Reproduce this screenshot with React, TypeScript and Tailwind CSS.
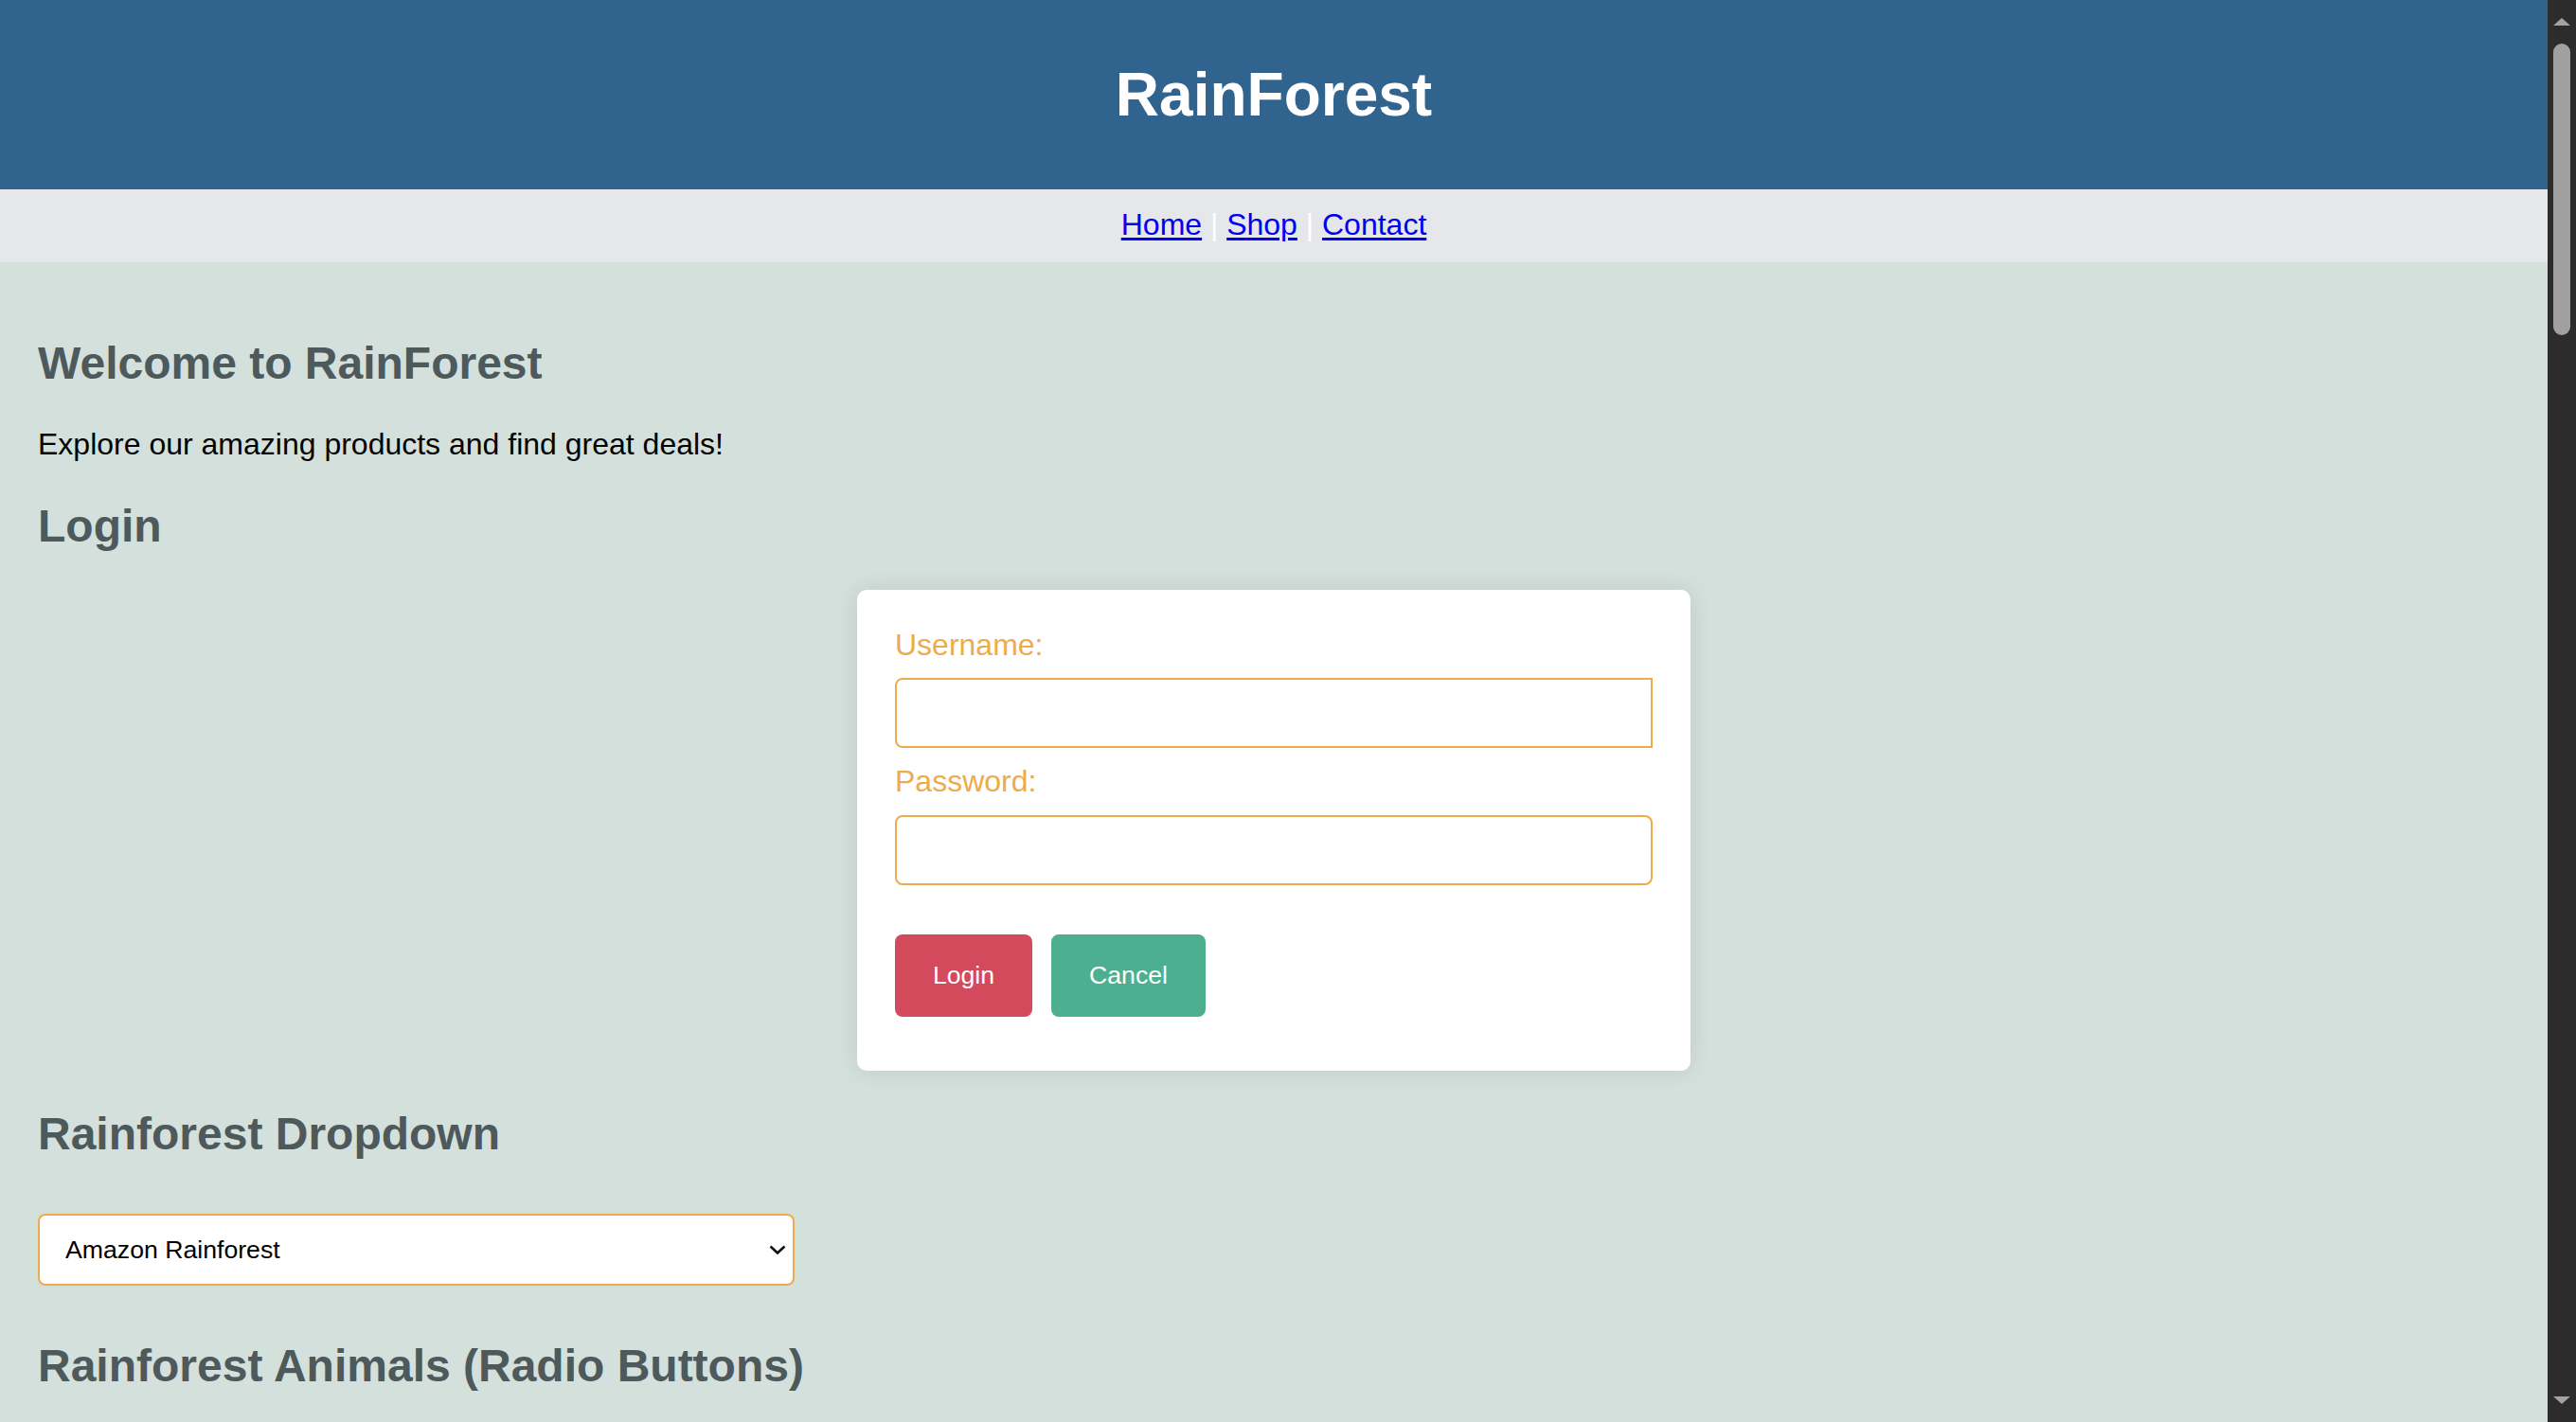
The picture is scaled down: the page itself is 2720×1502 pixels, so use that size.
import React from "react";

export default function App() {
  return (
    <div className="flex h-screen w-full overflow-hidden font-['Liberation_Sans',Arial,sans-serif]">
      <div className="flex min-w-0 flex-1 flex-col overflow-hidden bg-[#d4e0dc]">
        <header className="h-[200px] shrink-0 bg-[#30648e] pt-[63px] text-center">
          <h1 className="text-[64px] font-bold leading-[74px] text-white">RainForest</h1>
        </header>
        <nav className="h-[77px] shrink-0 bg-[#e6e7eb] pt-[19px] text-center text-[32px] leading-[37px] text-white">
          <a href="#" className="text-[#0000ee] underline decoration-[3px] underline-offset-[3px]">Home</a>
          {" | "}
          <a href="#" className="text-[#0000ee] underline decoration-[3px] underline-offset-[3px]">Shop</a>
          {" | "}
          <a href="#" className="text-[#0000ee] underline decoration-[3px] underline-offset-[3px]">Contact</a>
        </nav>
        <main className="flex flex-col px-[40px] pt-[79px]">
          <h2 className="text-[48px] font-bold leading-[55px] text-[#4d595b]">Welcome to RainForest</h2>
          <p className="mt-[40px] text-[32px] leading-[37px] text-black">Explore our amazing products and find great deals!</p>
          <h2 className="mt-[40px] text-[48px] font-bold leading-[55px] text-[#4d595b]">Login</h2>

          <div className="mx-auto mt-[40px] flex w-[880px] flex-col rounded-[10px] bg-white px-[40px] pb-[57px] pt-[40px] shadow-[0_0_24px_rgba(0,0,0,0.10)]">
            <label className="block text-[32px] leading-[37px] text-[#eeab4b]">Username:</label>
            <input type="text" className="mt-[16px] h-[74px] w-full rounded-l-[8px] rounded-r-none border-2 border-[#eeab4b] bg-white px-[16px] text-[26px] outline-none" />
            <label className="mt-[17px] block text-[32px] leading-[37px] text-[#eeab4b]">Password:</label>
            <input type="password" className="mt-[17px] h-[74px] w-full rounded-[8px] border-2 border-[#eeab4b] bg-white px-[16px] text-[26px] outline-none" />
            <div className="mt-[52px] flex gap-[20px]">
              <button className="h-[87px] w-[145px] rounded-[8px] bg-[#d34a5c] text-[26.67px] leading-[31px] text-white">Login</button>
              <button className="h-[87px] w-[163px] rounded-[8px] bg-[#4caf8f] text-[26.67px] leading-[31px] text-white">Cancel</button>
            </div>
          </div>

          <h2 className="mt-[39px] text-[48px] font-bold leading-[55px] text-[#4d595b]">Rainforest Dropdown</h2>
          <div className="mt-[57px] flex h-[76px] w-[799px] items-center rounded-[8px] border-2 border-[#eeab4b] bg-white pl-[27px] pr-[7px]">
            <select className="h-full flex-1 appearance-none bg-transparent text-[26.67px] text-black outline-none" defaultValue="amazon">
              <option value="amazon">Amazon Rainforest</option>
              <option value="congo">Congo Rainforest</option>
              <option value="daintree">Daintree Rainforest</option>
            </select>
            <svg width="18" height="10" viewBox="0 0 18 10" className="shrink-0">
              <polyline points="1.5,1.5 9,8.5 16.5,1.5" fill="none" stroke="#111" strokeWidth="2.6" />
            </svg>
          </div>

          <h2 className="mt-[57px] text-[48px] font-bold leading-[55px] text-[#4d595b]">Rainforest Animals (Radio Buttons)</h2>
        </main>
      </div>

      <div className="flex w-[30px] shrink-0 flex-col items-center bg-[#2c2c2c] pb-[19px] pt-[19px]">
        <svg width="18" height="8" viewBox="0 0 18 8" className="shrink-0">
          <polygon points="9,0 18,8 0,8" fill="#a3a3a3" />
        </svg>
        <div className="mt-[19px] h-[308px] w-[18px] shrink-0 rounded-full bg-[#a0a0a0]" />
        <div className="flex-1" />
        <svg width="18" height="8" viewBox="0 0 18 8" className="shrink-0">
          <polygon points="0,0 18,0 9,8" fill="#a3a3a3" />
        </svg>
      </div>
    </div>
  );
}
